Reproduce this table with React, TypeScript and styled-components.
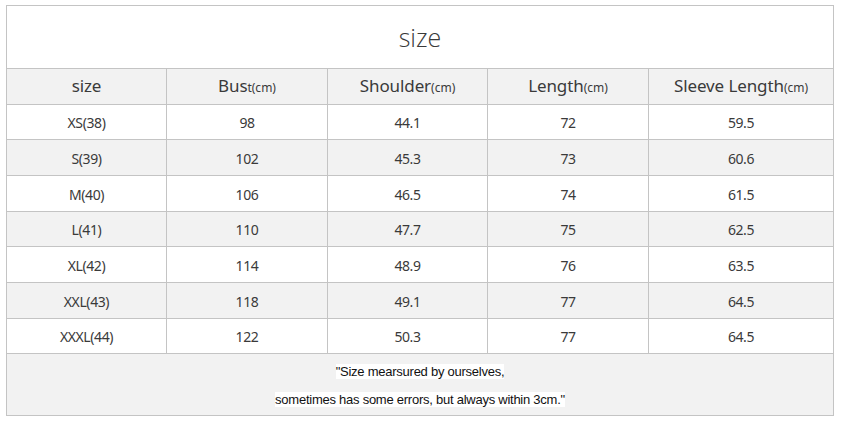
import React from 'react';
import styled, {createGlobalStyle} from 'styled-components';

const GlobalStyle = createGlobalStyle`
    html, body {
        margin: 0;
        padding: 0;
        background: #ffffff;
    }
    body {
        padding: 5px 0 0 6px;
        font-family: "Noto Sans", "Liberation Sans", sans-serif;
    }
`;

interface ISizeRow {
    size: string;
    bust: string;
    shoulder: string;
    length: string;
    sleeve: string;
}

const rows: ISizeRow[] = [
    {size: 'XS(38)', bust: '98', shoulder: '44.1', length: '72', sleeve: '59.5'},
    {size: 'S(39)', bust: '102', shoulder: '45.3', length: '73', sleeve: '60.6'},
    {size: 'M(40)', bust: '106', shoulder: '46.5', length: '74', sleeve: '61.5'},
    {size: 'L(41)', bust: '110', shoulder: '47.7', length: '75', sleeve: '62.5'},
    {size: 'XL(42)', bust: '114', shoulder: '48.9', length: '76', sleeve: '63.5'},
    {size: 'XXL(43)', bust: '118', shoulder: '49.1', length: '77', sleeve: '64.5'},
    {size: 'XXXL(44)', bust: '122', shoulder: '50.3', length: '77', sleeve: '64.5'},
];

// heights include the bottom border line
const rowHeights = [35, 36, 36, 35, 36, 36, 35];

function App() {
    return (
        <>
            <GlobalStyle/>
            <Chart>
                <Title>size</Title>
                <HeadCell>size</HeadCell>
                <HeadCell>Bus<Unit>t(cm)</Unit></HeadCell>
                <HeadCell>Shoulder<Unit>(cm)</Unit></HeadCell>
                <HeadCell>Length<Unit>(cm)</Unit></HeadCell>
                <HeadCell>Sleeve Length<Unit>(cm)</Unit></HeadCell>
                {rows.map((row: ISizeRow, index: number) => {
                    const cells = [row.size, row.bust, row.shoulder, row.length, row.sleeve];
                    return cells.map((value: string, col: number) =>
                        <Cell key={`${index}-${col}`} $shaded={index % 2 === 1}
                              style={{height: rowHeights[index]}}>
                            {value}
                        </Cell>
                    );
                })}
                <Note>
                    <NoteLine>"Size mearsured by ourselves,</NoteLine>
                    <NoteLine>sometimes has some errors, but always within 3cm."</NoteLine>
                </Note>
            </Chart>
        </>
    );
}

const Chart = styled.div`
    display: grid;
    grid-template-columns: 160px 161px 160px 161px 185px;
    width: 828px;
    box-sizing: border-box;
    border-top: 1px solid #c4c4c4;
    border-left: 1px solid #c4c4c4;
    color: #3a3a3a;
`;

const Cell = styled.div<{ $shaded?: boolean }>`
    box-sizing: border-box;
    display: flex;
    align-items: center;
    justify-content: center;
    border-right: 1px solid #c4c4c4;
    border-bottom: 1px solid #c4c4c4;
    background: ${p => p.$shaded ? '#f2f2f2' : '#ffffff'};
    font-size: 14px;
    letter-spacing: -0.4px;
    padding-top: 1px;
`;

const Title = styled(Cell)`
    grid-column: 1 / -1;
    height: 63px;
    font-family: "Open Sans", "Noto Sans", sans-serif;
    font-size: 25px;
    font-weight: 300;
    letter-spacing: 0;
    padding-bottom: 2px;
`;

const HeadCell = styled(Cell)`
    height: 36px;
    background: #f2f2f2;
    font-size: 17px;
    letter-spacing: -0.1px;
    align-items: baseline;
    padding-top: 5px;
`;

const Unit = styled.span`
    font-size: 12px;
    letter-spacing: 0;
`;

const Note = styled.div`
    grid-column: 1 / -1;
    box-sizing: border-box;
    height: 62px;
    display: flex;
    flex-direction: column;
    align-items: center;
    justify-content: center;
    gap: 13px;
    background: #f2f2f2;
    border-right: 1px solid #c4c4c4;
    border-bottom: 1px solid #c4c4c4;
    padding-top: 1px;
`;

const NoteLine = styled.span`
    background: #ffffff;
    color: #111111;
    font-family: "Liberation Sans", Arial, sans-serif;
    font-size: 13px;
    line-height: 15px;
    letter-spacing: -0.25px;
`;

export default App;
